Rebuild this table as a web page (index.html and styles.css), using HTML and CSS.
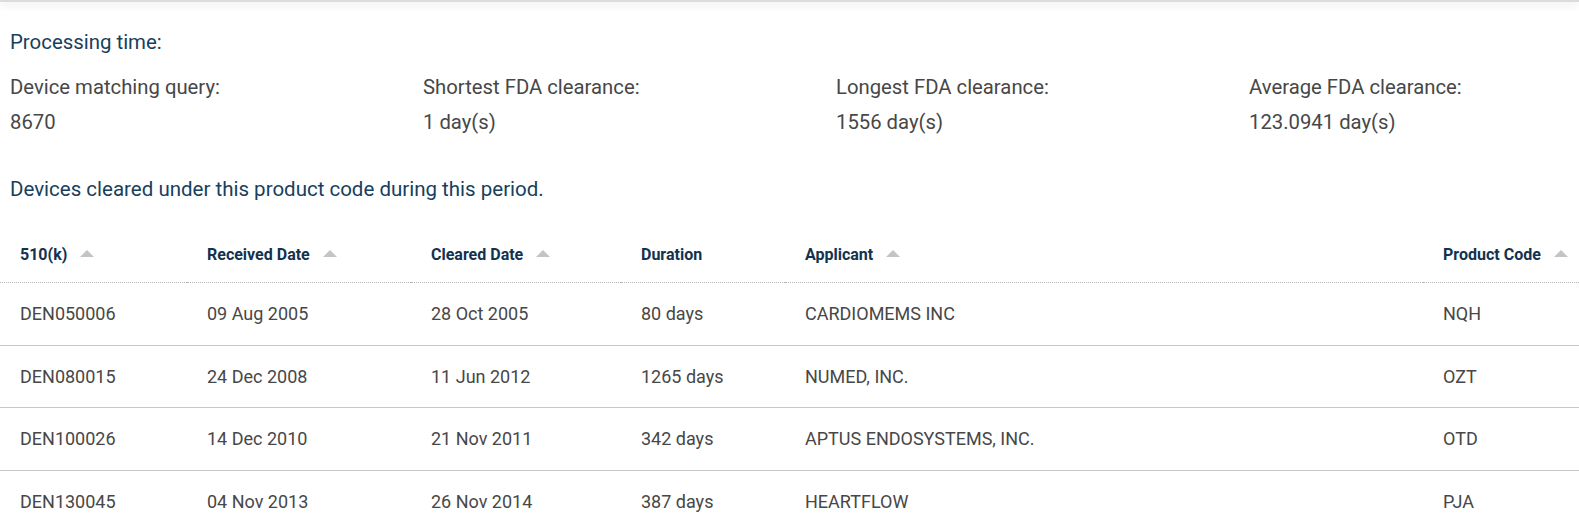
FILE: index.html
```html
<!DOCTYPE html>
<html>
<head>
<meta charset="utf-8">
<link rel="stylesheet" href="styles.css">
</head>
<body>
<div class="topbar"></div>
<main class="content">
  <h3 class="section-title first">Processing time:</h3>
  <div class="stats">
    <div class="stat"><div class="stat-label">Device matching query:</div><div class="stat-value">8670</div></div>
    <div class="stat"><div class="stat-label">Shortest FDA clearance:</div><div class="stat-value">1 day(s)</div></div>
    <div class="stat"><div class="stat-label">Longest FDA clearance:</div><div class="stat-value">1556 day(s)</div></div>
    <div class="stat"><div class="stat-label">Average FDA clearance:</div><div class="stat-value">123.0941 day(s)</div></div>
  </div>
  <h3 class="section-title second">Devices cleared under this product code during this period.</h3>
</main>
<table class="devices">
  <colgroup>
    <col class="c1"><col class="c2"><col class="c3"><col class="c4"><col class="c5"><col class="c6">
  </colgroup>
  <thead>
    <tr>
      <th><span class="sortable">510(k)</span></th>
      <th><span class="sortable">Received Date</span></th>
      <th><span class="sortable">Cleared Date</span></th>
      <th>Duration</th>
      <th><span class="sortable">Applicant</span></th>
      <th><span class="sortable">Product Code</span></th>
    </tr>
  </thead>
  <tbody>
    <tr><td>DEN050006</td><td>09 Aug 2005</td><td>28 Oct 2005</td><td>80 days</td><td>CARDIOMEMS INC</td><td>NQH</td></tr>
    <tr><td>DEN080015</td><td>24 Dec 2008</td><td>11 Jun 2012</td><td>1265 days</td><td>NUMED, INC.</td><td>OZT</td></tr>
    <tr><td>DEN100026</td><td>14 Dec 2010</td><td>21 Nov 2011</td><td>342 days</td><td>APTUS ENDOSYSTEMS, INC.</td><td>OTD</td></tr>
    <tr><td>DEN130045</td><td>04 Nov 2013</td><td>26 Nov 2014</td><td>387 days</td><td>HEARTFLOW</td><td>PJA</td></tr>
  </tbody>
</table>
</body>
</html>
```

FILE: styles.css
```css
html, body {
  margin: 0;
  padding: 0;
  background: #fff;
  overflow: hidden;
}
body {
  font-family: Roboto, "Liberation Sans", sans-serif;
  color: #474747;
  font-size: 18px;
}
.topbar {
  height: 2px;
  background: #dcdcdc;
  box-shadow: 0 2px 8px rgba(0, 0, 0, 0.18);
}
.content {
  padding: 0 10px;
}
.section-title {
  margin: 0;
  font-weight: 400;
  font-size: 20.4px;
  line-height: 24px;
  color: #17405e;
}
.section-title.first {
  padding-top: 28px;
}
.section-title.second {
  padding-top: 43px;
  font-size: 20.5px;
}
.stats {
  display: grid;
  grid-template-columns: 413px 413px 413px auto;
  padding-top: 21px;
}
.stat-label, .stat-value {
  font-size: 20.3px;
  line-height: 24px;
  color: #474747;
}
.stat-value {
  margin-top: 11px;
}
.devices {
  width: 100%;
  border-collapse: collapse;
  table-layout: fixed;
  margin-top: 25px;
}
.c1 { width: 187px; }
.c2 { width: 224px; }
.c3 { width: 210px; }
.c4 { width: 164px; }
.c5 { width: 638px; }
.c6 { width: auto; }
.devices th {
  text-align: left;
  font-size: 16px;
  font-weight: 700;
  color: #12324f;
  padding: 0 0 0 20px;
  height: 56px;
  border-bottom: 1px dotted #b5b5b5;
}
.sortable::after {
  content: "";
  display: inline-block;
  margin-left: 13px;
  vertical-align: 3px;
  border-left: 7px solid transparent;
  border-right: 7px solid transparent;
  border-bottom: 7px solid #c4c4c4;
}
.devices td {
  padding: 0 0 0 20px;
  height: 61.5px;
  font-size: 18px;
  color: #474747;
  border-bottom: 1px solid #c8c8c8;
}
.devices tbody tr:last-child td {
  border-bottom: none;
}
```
